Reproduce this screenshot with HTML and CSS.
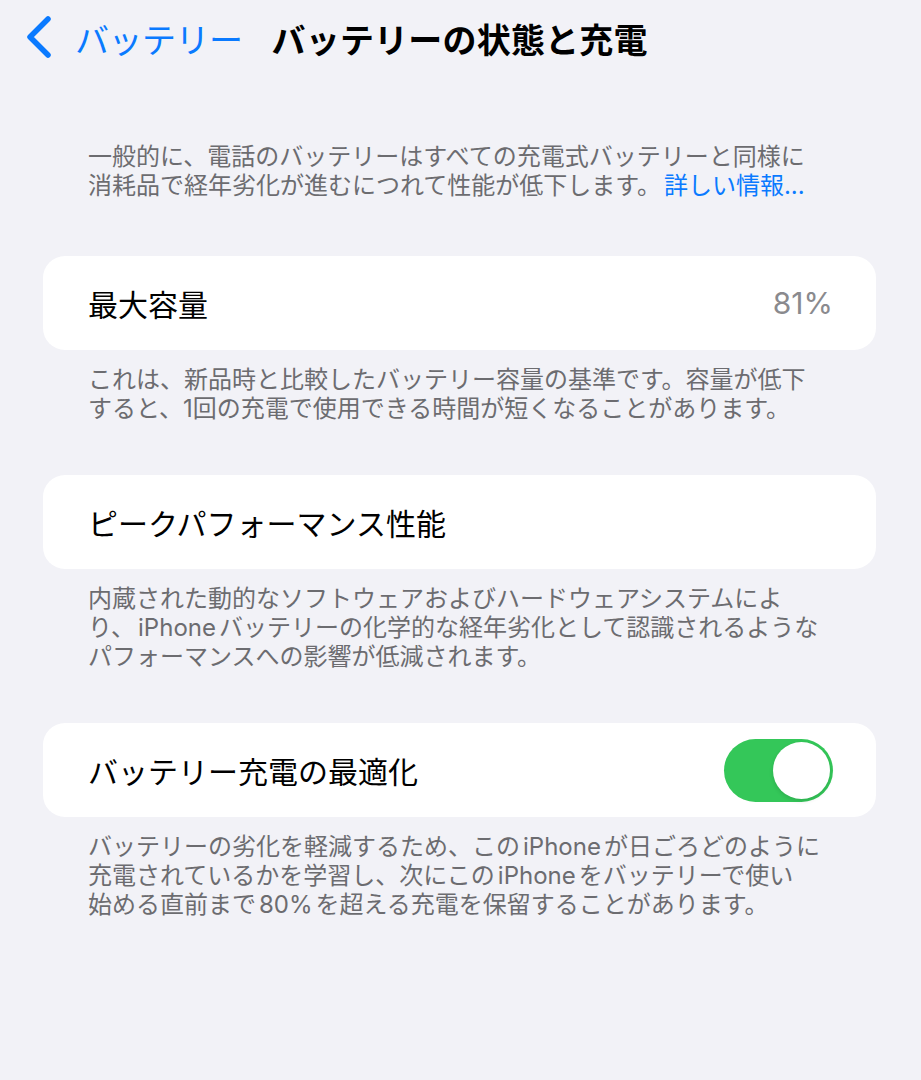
FILE: index.html
```html
<!DOCTYPE html>
<html lang="ja">
<head>
<meta charset="utf-8">
<title>バッテリーの状態と充電</title>
<link rel="stylesheet" href="styles.css">
</head>
<body>
<div class="page">
  <header class="nav">
    <a class="back">
      <svg class="chev" width="28" height="44" viewBox="0 0 28 44"><path d="M23 4 L5 22 L23 40" fill="none" stroke="#0a7aff" stroke-width="5.5" stroke-linecap="round" stroke-linejoin="round"/></svg>
      <span class="back-label">バッテリー</span>
    </a>
    <h1 class="title">バッテリーの状態と充電</h1>
  </header>

  <p class="note intro">一般的に、電話のバッテリーはすべての充電式バッテリーと同様に<br>消耗品で経年劣化が進むにつれて性能が低下します。<span class="link">詳しい情報...</span></p>

  <section class="group">
    <div class="card">
      <span class="label">最大容量</span>
      <span class="value">81%</span>
    </div>
    <p class="note">これは、新品時と比較したバッテリー容量の基準です。容量が低下<br>すると、1回の充電で使用できる時間が短くなることがあります。</p>
  </section>

  <section class="group">
    <div class="card">
      <span class="label">ピークパフォーマンス性能</span>
    </div>
    <p class="note">内蔵された動的なソフトウェアおよびハードウェアシステムによ<br>り、<span class="latin">iPhone</span>バッテリーの化学的な経年劣化として認識されるような<br>パフォーマンスへの影響が低減されます。</p>
  </section>

  <section class="group">
    <div class="card">
      <span class="label">バッテリー充電の最適化</span>
      <span class="toggle"><span class="knob"></span></span>
    </div>
    <p class="note">バッテリーの劣化を軽減するため、この<span class="latin">iPhone</span>が日ごろどのように<br>充電されているかを学習し、次にこの<span class="latin">iPhone</span>をバッテリーで使い<br>始める直前まで<span class="latin">80%</span>を超える充電を保留することがあります。</p>
  </section>
</div>
</body>
</html>
```

FILE: styles.css
```css
html, body {
  margin: 0;
  padding: 0;
  background: #f2f2f7;
}
body {
  font-family: "Inter", "Noto Sans CJK JP", sans-serif;
  color: #000;
  width: 921px;
  height: 1080px;
  overflow: hidden;
}
.page {
  display: flex;
  flex-direction: column;
}
.nav {
  height: 76px;
  display: flex;
  align-items: center;
  padding-left: 25px;
}
.back {
  display: flex;
  align-items: center;
  color: #0a7aff;
}
.chev {
  display: block;
  margin-top: -2px;
}
.back-label {
  margin-left: 22px;
  font-size: 34px;
  font-weight: 400;
  letter-spacing: -0.5px;
}
.title {
  margin: 0 0 0 29px;
  font-size: 34px;
  font-weight: 700;
  letter-spacing: 0.2px;
}
.note {
  margin: 0;
  padding: 0 45px;
  margin-left: 43px;
  font-size: 24px;
  line-height: 29px;
  color: #6c6c70;
  letter-spacing: 0;
}
.latin {
  margin: 0 3px;
}
.intro {
  margin-top: 66px;
  margin-bottom: 56px;
}
.link {
  color: #0a7aff;
  margin-left: 3px;
}
.group {
  display: flex;
  flex-direction: column;
  margin-bottom: 52px;
}
.card {
  margin: 0 45px 0 43px;
  height: 94px;
  background: #fff;
  border-radius: 22px;
  display: flex;
  align-items: center;
  justify-content: space-between;
  padding: 0 43px 0 45px;
  box-sizing: border-box;
}
.card + .note {
  margin-top: 15px;
}
.label {
  font-size: 30px;
  font-weight: 400;
}
.value {
  font-size: 30px;
  color: #8a8a8e;
}
.toggle {
  width: 109px;
  height: 63px;
  border-radius: 32px;
  background: #34c759;
  position: relative;
  flex: none;
}
.knob {
  position: absolute;
  right: 3px;
  top: 3px;
  width: 57px;
  height: 57px;
  border-radius: 50%;
  background: #fff;
  box-shadow: 0 2px 4px rgba(0,0,0,0.12);
}
```
